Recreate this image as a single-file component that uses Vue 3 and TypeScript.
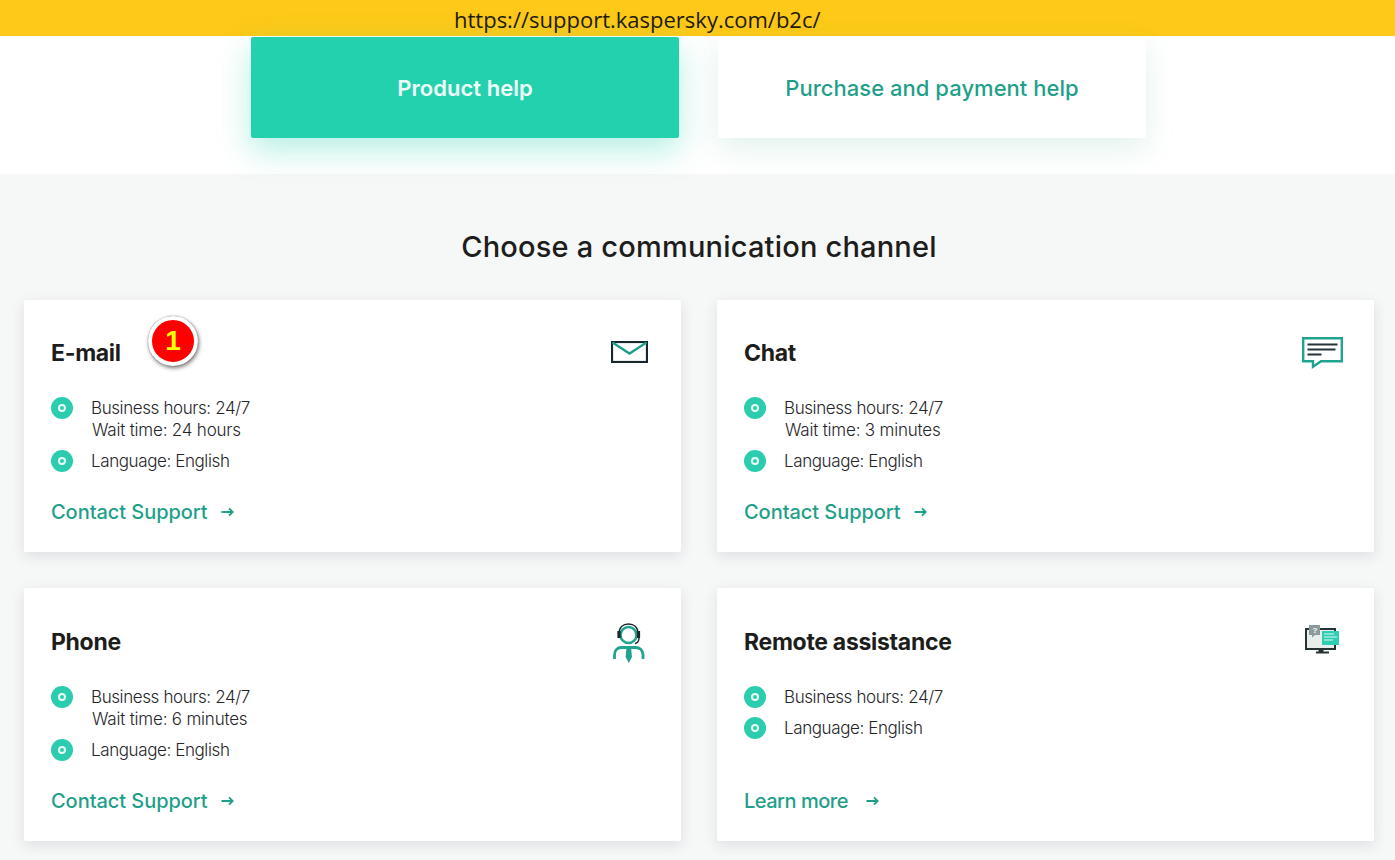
<script setup lang="ts">
type Row = { lines: string[] }
type Card = { title: string; icon: string; rows: Row[]; link: string; badge?: string }
const cards: Card[] = [
  { title: 'E-mail', icon: 'mail', badge: '1', link: 'Contact Support', rows: [{ lines: ['Business hours: 24/7', 'Wait time: 24 hours'] }, { lines: ['Language: English'] }] },
  { title: 'Chat', icon: 'chat', link: 'Contact Support', rows: [{ lines: ['Business hours: 24/7', 'Wait time: 3 minutes'] }, { lines: ['Language: English'] }] },
  { title: 'Phone', icon: 'phone', link: 'Contact Support', rows: [{ lines: ['Business hours: 24/7', 'Wait time: 6 minutes'] }, { lines: ['Language: English'] }] },
  { title: 'Remote assistance', icon: 'remote', link: 'Learn more', rows: [{ lines: ['Business hours: 24/7'] }, { lines: ['Language: English'] }] },
]
</script>

<template>
  <div class="page">
    <div class="urlbar">https://support.kaspersky.com/b2c/</div>
    <div class="tabs">
      <a class="tab active">Product help</a>
      <a class="tab">Purchase and payment help</a>
    </div>
    <main class="section">
      <h1>Choose a communication channel</h1>
      <div class="grid">
        <article v-for="c in cards" :key="c.title" class="card">
          <div class="head">
            <h2>{{ c.title }}</h2>
            <span v-if="c.badge" class="badge">{{ c.badge }}</span>
            <svg v-if="c.icon === 'mail'" class="icon mail" width="37" height="22" viewBox="0 0 37 22" fill="none">
              <rect x="1" y="1" width="35" height="20" stroke="#14282d" stroke-width="2.200" />
              <path d="M1.500 1.500 18.500 12.500 35.500 1.500" stroke="#1f9f8a" stroke-width="2.400" />
            </svg>
            <svg v-else-if="c.icon === 'chat'" class="icon chat" width="41" height="32" viewBox="0 0 41 32" fill="none">
              <path d="M1.200 1.200h38.600v23H19l-8 5.500v-5.500H1.200z" stroke="#20a48f" stroke-width="2.400" />
              <path d="M5.500 7.500h30M5.500 12.500h28M5.500 17.500h14" stroke="#25333a" stroke-width="2.200" />
            </svg>
            <svg v-else-if="c.icon === 'phone'" class="icon phone" width="33" height="41" viewBox="0 0 33 41" fill="none">
              <circle cx="15.500" cy="12" r="8" stroke="#20a48f" stroke-width="2.600" />
              <path d="M6 11C6 4.500 10 1 15.500 1S25 4.500 25 11" stroke="#18282d" stroke-width="1.600" />
              <path d="M6 8v7M25.500 8v7" stroke="#18282d" stroke-width="3.200" />
              <path d="M26 15c0 3-1.500 5-4 5.500" stroke="#18282d" stroke-width="1.400" />
              <path d="M1.500 36v-4c0-5 3-7.500 7-7.500h14c4 0 7.500 2.500 7.500 7.500v4" stroke="#20a48f" stroke-width="2.800" />
              <path d="M13.500 24h4.500l1 10-3.200 6-3.200-6z" fill="#20a48f" />
            </svg>
            <svg v-else class="icon remote" width="36" height="30" viewBox="0 0 36 30" fill="none">
              <rect x="2" y="5" width="29" height="20" fill="#e8eeec" stroke="#263234" stroke-width="2" />
              <path d="M5 1h11v10H11l-3 2.500V11H5z" fill="#8c9a9c" />
              <text x="8.500" y="9" class="q">?</text>
              <rect x="18" y="7" width="17" height="14" fill="#2ecfb0" />
              <path d="M20 10h10M20 13h13M20 16h9" stroke="#dff7f1" stroke-width="1.200" />
              <path d="M17 25v3" stroke="#263234" stroke-width="5" />
              <path d="M12 28.500h13" stroke="#263234" stroke-width="2" />
            </svg>
          </div>
          <ul class="rows">
            <li v-for="r in c.rows" :key="r.lines[0]" class="row">
              <span class="dot"></span>
              <span class="lines"><span v-for="l in r.lines" :key="l" class="line">{{ l }}</span></span>
            </li>
          </ul>
          <a class="link" :class="{ wide: c.link === 'Learn more' }">
            <span>{{ c.link }}</span>
            <svg width="13" height="10" viewBox="0 0 13 10" fill="none">
              <path d="M0.500 5h11M8 1.300 11.700 5 8 8.700" stroke="#1f9f8a" stroke-width="1.800" />
            </svg>
          </a>
        </article>
      </div>
    </main>
  </div>
</template>

<style scoped>
.page { width: 1395px; height: 860px; overflow: hidden; background: #fff; font-family: Inter, "Liberation Sans", sans-serif; color: #1d1d1b; }
.urlbar { height: 36px; background: #fec918; font-family: "Open Sans", "Noto Sans", sans-serif; font-size: 22px; line-height: 38px; color: #1f1a0a; padding-left: 454px; box-sizing: border-box; overflow: hidden; white-space: nowrap; }
.tabs { height: 138px; box-sizing: border-box; padding: 1px 0 0 251px; display: flex; gap: 39px; align-items: flex-start; }
.tab { width: 428px; height: 101px; display: flex; align-items: center; justify-content: center; font-size: 22px; font-weight: 500; color: #1f9f8a; background: #fff; border-radius: 2px; box-shadow: 0 10px 30px rgba(40, 160, 135, .14); letter-spacing: .03px; }
.tab.active { background: #24d1ae; color: #f1fffb; box-shadow: 0 12px 32px rgba(36, 209, 174, .34); font-weight: 600; }
.section { background: #f6f7f7; height: 686px; padding: 0 21px 0 24px; box-sizing: border-box; }
h1 { margin: 0; padding-top: 54px; height: 126px; box-sizing: border-box; text-align: center; font-size: 29px; line-height: 38px; font-weight: 500; letter-spacing: .2px; color: #1d1d1b; }
.grid { display: grid; grid-template-columns: 657px 657px; column-gap: 36px; row-gap: 36px; grid-template-rows: 252px 253px; }
.card { background: #fff; border-radius: 2px; box-shadow: 0 4px 14px rgba(40, 60, 70, .12); padding: 0 27px; display: flex; flex-direction: column; position: relative; }
.card:nth-child(n+3) { padding-top: 1px; }
.head { display: flex; justify-content: space-between; height: 97px; position: relative; }
h2 { margin: 37px 0 0; font-size: 23px; line-height: 32px; font-weight: 700; letter-spacing: -.3px; color: #1d1d1b; }
.icon { position: absolute; }
.mail { right: 6px; top: 41px; }
.chat { right: 4px; top: 37px; }
.phone { right: 8px; top: 34px; }
.remote { right: 7px; top: 35px; }
.q { font-family: "Liberation Sans", sans-serif; font-size: 8px; font-weight: 700; fill: #fff; }
.badge { position: absolute; left: 97px; top: 16px; width: 42px; height: 42px; border-radius: 50%; background: #fe0000; border: 4px solid #fff; box-shadow: 1px 2px 4px rgba(0, 0, 0, .55), 0 0 1px rgba(0, 0, 0, .6); color: #ffff00; font-family: "Liberation Sans", sans-serif; font-weight: 700; font-size: 28px; line-height: 42px; text-align: center; box-sizing: content-box; }
.rows { list-style: none; margin: 0; padding: 0; display: flex; flex-direction: column; gap: 9px; height: 102px; }
.row { display: flex; gap: 18px; font-size: 17px; line-height: 22px; font-weight: 300; color: #26262a; letter-spacing: -.4px; }
.lines { display: flex; flex-direction: column; }
.line:nth-child(2) { padding-left: 1px; letter-spacing: -.2px; }
.dot { width: 22px; height: 22px; border-radius: 50%; background: #2bcdae; position: relative; flex: none; }
.dot::after { content: ""; position: absolute; left: 7px; top: 7px; width: 8px; height: 8px; box-sizing: border-box; border: 2px solid #eafaf6; border-radius: 50%; }
.link { display: flex; align-items: center; gap: 13px; font-size: 20px; line-height: 26px; font-weight: 500; color: #1f9f8a; letter-spacing: -.05px; }
.link.wide { gap: 18px; letter-spacing: -.5px; }
</style>
